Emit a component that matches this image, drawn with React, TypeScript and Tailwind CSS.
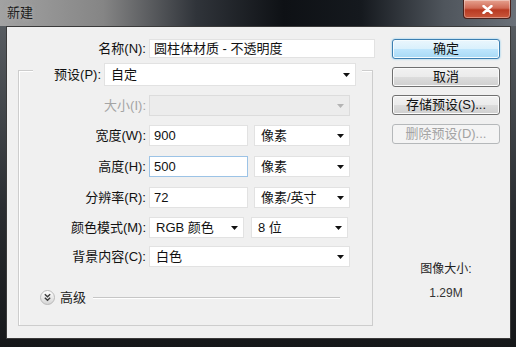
import React from "react";

const font = "font-['Liberation_Sans','Noto_Sans_CJK_SC',sans-serif]";

function Arrow({ disabled = false }: { disabled?: boolean }) {
  return (
    <svg width="7" height="4" viewBox="0 0 7 4">
      <path d="M0 0h7L3.5 4z" fill={disabled ? "#b4b4b4" : "#111"} />
    </svg>
  );
}

function Select({ value, w, h = "h-[21px]", disabled = false }: { value: string; w: string; h?: string; disabled?: boolean }) {
  return (
    <div
      className={`${w} ${h} flex items-center justify-between pl-[6px] pr-[5px] border text-[13px] leading-[16px] ${
        disabled ? "bg-[#ececec] border-[#dcdcdc]" : "bg-white border-[#e2e2e2]"
      }`}
    >
      <span className="text-[#111]">{value}</span>
      <Arrow disabled={disabled} />
    </div>
  );
}

function Input({ value, w, focused = false }: { value: string; w: string; focused?: boolean }) {
  return (
    <div
      className={`${w} h-[21px] flex items-center pl-[4px] bg-white border text-[13px] leading-[16px] text-[#111] ${
        focused ? "border-[#9cc3e6]" : "border-[#e2e2e2]"
      }`}
    >
      {value}
    </div>
  );
}

function Row({ label, disabled = false, className = "", children }: { label: string; disabled?: boolean; className?: string; children: React.ReactNode }) {
  return (
    <div className={`flex items-center h-[21px] ${className}`}>
      <span className={`w-[127px] text-right text-[13px] leading-[16px] ${disabled ? "text-[#a4a4a4]" : "text-[#111]"}`}>{label}</span>
      <div className="ml-[3px] flex gap-[6px]">{children}</div>
    </div>
  );
}

type BtnKind = "default" | "normal" | "disabled";

function Button({ label, kind = "normal", className = "" }: { label: string; kind?: BtnKind; className?: string }) {
  const look =
    kind === "default"
      ? "border-[#3c7fb1] bg-[linear-gradient(to_bottom,#eaf6fd_0%,#d9f0fc_50%,#bee6fd_50%,#a7d9f5_100%)] shadow-[0_0_2px_#6bc3f0,inset_0_0_0_1px_#f4fbfe] text-[#111]"
      : kind === "disabled"
      ? "border-[#b5b8ba] bg-[#f4f4f4] text-[#a3a3a3]"
      : "border-[#707070] bg-[linear-gradient(to_bottom,#f2f2f2_0%,#ebebeb_50%,#dddddd_50%,#cfcfcf_100%)] shadow-[inset_0_0_0_1px_#fbfbfb] text-[#111]";
  return (
    <div className={`w-[108px] h-[20px] rounded-[3px] border flex items-center justify-center text-[13px] leading-[16px] ${look} ${className}`}>
      {label}
    </div>
  );
}

export default function App() {
  return (
    <div className={`w-[516px] h-[347px] overflow-hidden bg-[linear-gradient(to_bottom,#5e6368_0%,#2a2d31_60%,#151719_100%)] ${font}`}>
      {/* title bar */}
      <div className="h-[26px] flex items-start justify-between pr-[5px] bg-[linear-gradient(to_right,#a2a2a2_0%,#858585_20%,#30343a_38%,#0e1115_55%,#15191e_70%,#4f555c_86%,#6a7078_100%)]">
        <span className="pl-[7px] mt-[5px] text-[13px] leading-[16px] text-[#1c1c1c] [text-shadow:0_0_4px_rgba(200,200,200,0.6)]">新建</span>
        <div className="w-[48px] h-[19px] rounded-b-[4px] border border-t-0 border-[#4a211b] bg-[linear-gradient(to_bottom,#e6a290_0%,#d06a55_45%,#b83a22_55%,#c9583c_100%)] shadow-[inset_0_0_0_1px_rgba(255,255,255,0.35)] flex items-center justify-center">
          <svg width="11" height="9" viewBox="0 0 11 9">
            <path d="M1.5 1l8 7M9.5 1l-8 7" stroke="#fff" strokeWidth="2.4" strokeLinecap="round" />
          </svg>
        </div>
      </div>

      {/* client */}
      <div className="ml-[6px] w-[505px] h-[313px] border border-[#3a3a3a] bg-[#f0f0f0] flex pt-[12px]">
        <div className="w-[369px]">
          <div className="flex items-center h-[19px]">
            <span className="w-[139px] text-right text-[13px] leading-[16px] text-[#111]">名称(N):</span>
            <div className="ml-[3px] w-[226px] h-[19px] flex items-center pl-[4px] bg-white border border-[#e2e2e2] text-[13px] leading-[16px] text-[#111]">
              圆柱体材质 - 不透明度
            </div>
          </div>

          <div className="ml-[11px] mt-[12px] w-[355px] h-[256px] border border-[#cdcdcd] shadow-[inset_1px_1px_0_#fff]">
            <div className="-mt-[8px] ml-[14px] w-max flex items-center pr-[6px] bg-[#f0f0f0]">
              <span className="w-[68px] text-right text-[13px] leading-[16px] text-[#111]">预设(P):</span>
              <div className="ml-[3px]">
                <Select value="自定" w="w-[252px]" h="h-[23px]" />
              </div>
            </div>

            <Row label="大小(I):" disabled className="mt-[9px]">
              <Select value="" w="w-[201px]" disabled />
            </Row>
            <Row label="宽度(W):" className="mt-[9px]">
              <Input value="900" w="w-[99px]" />
              <Select value="像素" w="w-[96px]" />
            </Row>
            <Row label="高度(H):" className="mt-[10px]">
              <Input value="500" w="w-[99px]" focused />
              <Select value="像素" w="w-[96px]" />
            </Row>
            <Row label="分辨率(R):" className="mt-[10px]">
              <Input value="72" w="w-[99px]" />
              <Select value="像素/英寸" w="w-[96px]" />
            </Row>
            <Row label="颜色模式(M):" className="mt-[9px]">
              <Select value="RGB 颜色" w="w-[95px]" />
              <div className="ml-[1px]">
                <Select value="8 位" w="w-[97px]" />
              </div>
            </Row>
            <Row label="背景内容(C):" className="mt-[8px]">
              <Select value="白色" w="w-[201px]" />
            </Row>

            <div className="mt-[23px] ml-[21px] mr-[32px] h-[15px] flex items-center">
              <svg width="15" height="15" viewBox="0 0 15 15">
                <defs>
                  <linearGradient id="adv" x1="0" y1="0" x2="0" y2="1">
                    <stop offset="0" stopColor="#ffffff" />
                    <stop offset="1" stopColor="#d4d4d4" />
                  </linearGradient>
                </defs>
                <circle cx="7.5" cy="7.5" r="7" fill="url(#adv)" stroke="#b9b9b9" />
                <path d="M4.8 4.3l2.7 2.4 2.7-2.4M4.8 7.8l2.7 2.4 2.7-2.4" fill="none" stroke="#3a3a3a" strokeWidth="1.4" />
              </svg>
              <span className="ml-[5px] text-[13px] leading-[16px] text-[#222]">高级</span>
              <div className="ml-[7px] flex-1 h-[2px] border-t border-[#c6c6c6] bg-white" />
            </div>
          </div>
        </div>

        <div className="ml-[16px] w-[108px] flex flex-col">
          <Button label="确定" kind="default" />
          <Button label="取消" className="mt-[8px]" />
          <Button label="存储预设(S)..." className="mt-[8px]" />
          <Button label="删除预设(D)..." kind="disabled" className="mt-[9px]" />
          <div className="mt-[117px] text-center text-[12px] leading-[16px] text-[#222]">图像大小:</div>
          <div className="mt-[8px] text-center text-[12px] leading-[16px] text-[#333]">1.29M</div>
        </div>
      </div>
    </div>
  );
}
